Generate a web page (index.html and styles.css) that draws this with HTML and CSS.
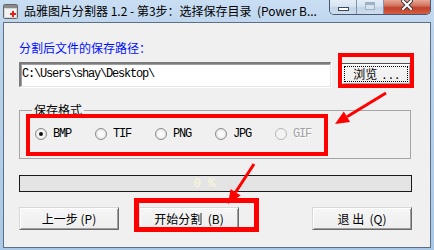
FILE: index.html
```html
<!DOCTYPE html>
<html>
<head>
<meta charset="utf-8">
<link rel="stylesheet" href="styles.css">
</head>
<body>
<div class="window">
  <div class="titlebar">
    <svg class="app-icon" width="15" height="15" viewBox="0 0 15 15">
      <rect x="0.5" y="0.5" width="14" height="14" rx="1" fill="#d6d6d6" stroke="#666"/>
      <rect x="1" y="1" width="13" height="3" fill="#8a8a8a"/>
      <rect x="2" y="5" width="11" height="8" fill="#f4f4f4"/>
      <path d="M9 7h2v2h2v2h-2v2h-2v-2h-2v-2h2z" fill="#e3231f"/>
    </svg>
    <span class="title">品雅图片分割器 1.2 - 第3步：选择保存目录&nbsp; (Power B...</span>
    <div class="caption">
      <div class="cb cb-min"><span class="min-bar"></span></div>
      <div class="cb cb-max"><span class="max-box"></span></div>
      <div class="cb cb-close">
        <svg width="12" height="10" viewBox="0 0 12 10">
          <path d="M2 1L10 9M10 1L2 9" stroke="#3a3a3a" stroke-width="4" stroke-linecap="square"/>
          <path d="M2 1L10 9M10 1L2 9" stroke="#fff" stroke-width="2" stroke-linecap="square"/>
        </svg>
      </div>
    </div>
  </div>
  <div class="client">
    <div class="path-label">分割后文件的保存路径：</div>
    <div class="path-row">
      <div class="path-input">C:\Users\shay\Desktop\</div>
      <button class="btn browse"><span class="focus">浏览 <span class="dots">...</span></span></button>
    </div>
    <fieldset class="group">
      <legend>保存格式</legend>
      <div class="radios">
        <label class="radio"><span class="circle checked"></span>BMP</label>
        <label class="radio"><span class="circle"></span>TIF</label>
        <label class="radio"><span class="circle"></span>PNG</label>
        <label class="radio"><span class="circle"></span>JPG</label>
        <label class="radio disabled"><span class="circle"></span>GIF</label>
      </div>
    </fieldset>
    <div class="progress"><span>0 %</span></div>
    <div class="actions">
      <button class="btn">上一步 (P)</button>
      <button class="btn start">开始分割&nbsp; (B)</button>
      <button class="btn quit">退 出&nbsp; (Q)</button>
    </div>
  </div>
  <div class="mark mark-browse"></div>
  <div class="mark mark-radios"></div>
  <div class="mark mark-start"></div>
  <svg class="arrows" width="434" height="250" viewBox="0 0 434 250">
    <line x1="386" y1="93" x2="347" y2="116.7" stroke="#f00" stroke-width="3"/>
    <polygon points="335,124 343.8,111.6 350.1,121.9" fill="#f00"/>
    <line x1="254" y1="164" x2="235.6" y2="192.3" stroke="#f00" stroke-width="3"/>
    <polygon points="228,204 230.6,189 240.7,195.5" fill="#f00"/>
  </svg>
</div>
</body>
</html>
```
FILE: styles.css
```css
* { box-sizing: border-box; }
body { margin: 0; }

.window {
  position: relative;
  width: 434px;
  height: 250px;
  display: flex;
  flex-direction: column;
  overflow: hidden;
  background: linear-gradient(180deg, #c9def3 0%, #bcd4ec 12%, #b4cee9 60%, #aac8e6 100%);
  font-family: "Noto Sans CJK SC", sans-serif;
  font-size: 12px;
  color: #000;
}

.titlebar {
  height: 22px;
  display: flex;
  align-items: center;
  flex-shrink: 0;
}
.app-icon { margin-left: 3px; flex-shrink: 0; }
.title {
  margin-left: 6px;
  font-size: 12px;
  line-height: 16px;
  white-space: nowrap;
  color: #000;
}
.caption {
  margin-left: auto;
  margin-right: 3px;
  align-self: flex-start;
  display: flex;
  height: 15px;
  border: 1px solid #465a73;
  border-top: none;
  border-radius: 0 0 5px 5px;
  overflow: hidden;
}
.cb {
  display: flex;
  align-items: flex-start;
  justify-content: center;
  height: 100%;
}
.cb-min, .cb-max {
  width: 27px;
  background: linear-gradient(180deg, #e4edf7 0%, #d6e3f1 45%, #c3d4e8 55%, #cfdded 100%);
  border-right: 1px solid #7f93ab;
}
.min-bar {
  margin-top: 7px;
  width: 11px;
  height: 4px;
  background: #fff;
  border: 1px solid #3a4a5e;
}
.max-box {
  margin-top: 2px;
  width: 10px;
  height: 8px;
  border: 1px solid #9fb1c6;
  border-top-width: 3px;
  background: #d7e2ef;
}
.cb-close {
  width: 46px;
  background: linear-gradient(180deg, #e8a897 0%, #d27360 40%, #c0432b 55%, #d55b41 100%);
}

.client {
  flex: 1;
  margin: 0 3px 2px 3px;
  border: 1px solid #5d6f85;
  background: #f0f0f0;
  padding: 18px 18px 0 15px;
  display: flex;
  flex-direction: column;
}

.path-label {
  color: #0010ff;
  line-height: 14px;
  height: 14px;
}

.path-row {
  margin-top: 7px;
  display: flex;
  align-items: flex-start;
}
.path-input {
  width: 312px;
  height: 25px;
  background: #fff;
  border-style: solid;
  border-width: 2px 1px 1px 2px;
  border-color: #7a7a7a #e3e3e3 #e3e3e3 #7a7a7a;
  box-shadow: inset 1px 1px 0 #a0a0a0, 1px 1px 0 #fff;
  padding: 2px 0 0 1px;
  font-family: "Liberation Mono", monospace;
  font-size: 12px;
  line-height: 16px;
  letter-spacing: -1.2px;
  white-space: nowrap;
}

.btn {
  font-family: "Noto Sans CJK SC", sans-serif;
  font-size: 12px;
  line-height: 14px;
  color: #000;
  width: 100px;
  height: 23px;
  padding: 0;
  background: linear-gradient(180deg, #f6f6f6 0%, #eeeeee 100%);
  border: 1px solid;
  border-color: #d8d8d8 #6a6a6a #6a6a6a #d8d8d8;
  box-shadow: inset 1px 1px 0 #fff, inset -1px -1px 0 #a0a0a0;
  display: flex;
  align-items: center;
  justify-content: center;
  white-space: nowrap;
}
.browse {
  margin-left: 10px;
  margin-top: 1px;
  width: 70px;
  height: 22px;
  border-color: #505050 #3a3a3a #3a3a3a #505050;
}
.browse .focus {
  width: 64px;
  height: 16px;
  border: 1px dotted #000;
  display: flex;
  align-items: center;
  justify-content: center;
  white-space: pre;
}
.browse .dots {
  letter-spacing: 3px;
  margin-left: 3px;
  margin-right: -3px;
}

.group {
  margin: 16px 0 0 0;
  width: 392px;
  padding: 9px 0 16px 15px;
  border: 1px solid #a5a5a5;
  min-inline-size: 0;
}
.group legend {
  margin-left: -3px;
  padding: 0 2px;
  line-height: 14px;
  height: 14px;
}
.radios {
  display: flex;
  height: 16px;
  align-items: center;
}
.radio {
  width: 60px;
  display: flex;
  align-items: center;
  font-family: "Liberation Mono", monospace;
  font-size: 12px;
  letter-spacing: -1.2px;
  line-height: 16px;
}
.circle {
  width: 12px;
  height: 12px;
  border-radius: 50%;
  border: 1px solid #8b8b8b;
  background: radial-gradient(circle at 50% 50%, #ffffff 0%, #f4f4f4 45%, #d9d9d9 100%);
  margin-right: 6px;
  flex-shrink: 0;
  display: flex;
  align-items: center;
  justify-content: center;
}
.circle.checked::after {
  content: "";
  width: 4px;
  height: 4px;
  border-radius: 50%;
  background: #111;
}
.radio.disabled { color: #a3a3a3; text-shadow: 1px 1px 0 #fff; }
.radio.disabled .circle { border-color: #b8b8b8; background: #f3f3f3; }

.progress {
  margin-top: 16px;
  width: 393px;
  height: 17px;
  border: 1px solid #1a1a1a;
  background: #e4e4e4;
  display: flex;
  align-items: center;
  justify-content: center;
  padding-right: 22px;
  font-family: "Liberation Mono", monospace;
  font-size: 12px;
  color: #fdf8d8;
  line-height: 14px;
}

.actions {
  margin-top: 15px;
  display: flex;
  width: 393px;
}
.start { margin-left: 20px; }
.quit { margin-left: auto; }

.mark {
  position: absolute;
  border: 4px solid #f00;
  pointer-events: none;
}
.mark-browse { left: 338px; top: 53px; width: 76px; height: 35px; }
.mark-radios { left: 26px; top: 114px; width: 302px; height: 42px; }
.mark-start { left: 134px; top: 198px; width: 125px; height: 34px; border-width: 5px; }

.arrows {
  position: absolute;
  left: 0;
  top: 0;
  pointer-events: none;
}
```
